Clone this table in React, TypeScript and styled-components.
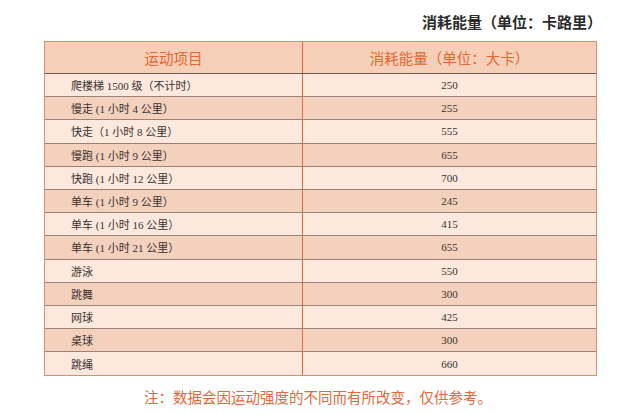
import styled, { createGlobalStyle } from 'styled-components';

const GlobalStyle = createGlobalStyle`
  html, body {
    margin: 0;
    padding: 0;
    background: #ffffff;
  }
`;

const Page = styled.div`
  width: 640px;
  height: 414px;
  padding-top: 13px;
  box-sizing: border-box;
  font-family: "Noto Sans CJK SC", "Noto Sans", sans-serif;
`;

const Title = styled.div`
  text-align: right;
  padding-right: 38px;
  font-size: 15px;
  line-height: 18px;
  font-weight: 700;
  color: #2b2b2b;
`;

const Table = styled.div`
  margin: 10px 0 0 44px;
  width: 553px;
  border: 1px solid #e48a6c;
  box-sizing: border-box;
`;

const HeaderRow = styled.div`
  display: grid;
  grid-template-columns: 258px 1fr;
  height: 32px;
  background: #f6cfb9;
  border-bottom: 1px solid #6e5a50;
  box-sizing: border-box;
`;

const HeaderCell = styled.div<{ $divider?: boolean }>`
  display: flex;
  align-items: center;
  justify-content: center;
  font-size: 14.5px;
  color: #e8652f;
  border-right: ${(p) => (p.$divider ? '1px solid #e0693f' : 'none')};
`;

const Row = styled.div<{ $dark: boolean; $last: boolean }>`
  display: grid;
  grid-template-columns: 258px 1fr;
  height: 23.2px;
  background: ${(p) => (p.$dark ? '#f4d1bd' : '#fce8dd')};
  border-bottom: ${(p) => (p.$last ? 'none' : '1px solid #9c8275')};
  box-sizing: border-box;
`;

const NameCell = styled.div`
  display: flex;
  align-items: center;
  padding-left: 26px;
  font-family: "Liberation Serif", "Noto Sans CJK SC", serif;
  font-size: 11px;
  color: #3a3230;
  border-right: 1px solid #e0693f;
`;

const ValueCell = styled.div`
  display: flex;
  align-items: center;
  justify-content: center;
  font-family: "Liberation Serif", "Noto Sans CJK SC", serif;
  font-size: 11px;
  color: #3a3230;
`;

const Note = styled.div`
  margin-top: 12px;
  text-align: center;
  padding-right: 4px;
  font-size: 14.5px;
  line-height: 18px;
  color: #e5683a;
`;

const rows: [string, number][] = [
  ['爬楼梯 1500 级（不计时）', 250],
  ['慢走 (1 小时 4 公里）', 255],
  ['快走（1 小时 8 公里）', 555],
  ['慢跑 (1 小时 9 公里）', 655],
  ['快跑 (1 小时 12 公里）', 700],
  ['单车 (1 小时 9 公里）', 245],
  ['单车 (1 小时 16 公里）', 415],
  ['单车 (1 小时 21 公里）', 655],
  ['游泳', 550],
  ['跳舞', 300],
  ['网球', 425],
  ['桌球', 300],
  ['跳绳', 660],
];

const App = () => {
  return (
    <>
      <GlobalStyle />
      <Page>
        <Title>消耗能量（单位：卡路里）</Title>
        <Table>
          <HeaderRow>
            <HeaderCell $divider>运动项目</HeaderCell>
            <HeaderCell>消耗能量（单位：大卡）</HeaderCell>
          </HeaderRow>
          {rows.map(([name, kcal], i) => (
            <Row key={i} $dark={i % 2 === 1} $last={i === rows.length - 1}>
              <NameCell>{name}</NameCell>
              <ValueCell>{kcal}</ValueCell>
            </Row>
          ))}
        </Table>
        <Note>注：数据会因运动强度的不同而有所改变，仅供参考。</Note>
      </Page>
    </>
  );
};

export default App;
